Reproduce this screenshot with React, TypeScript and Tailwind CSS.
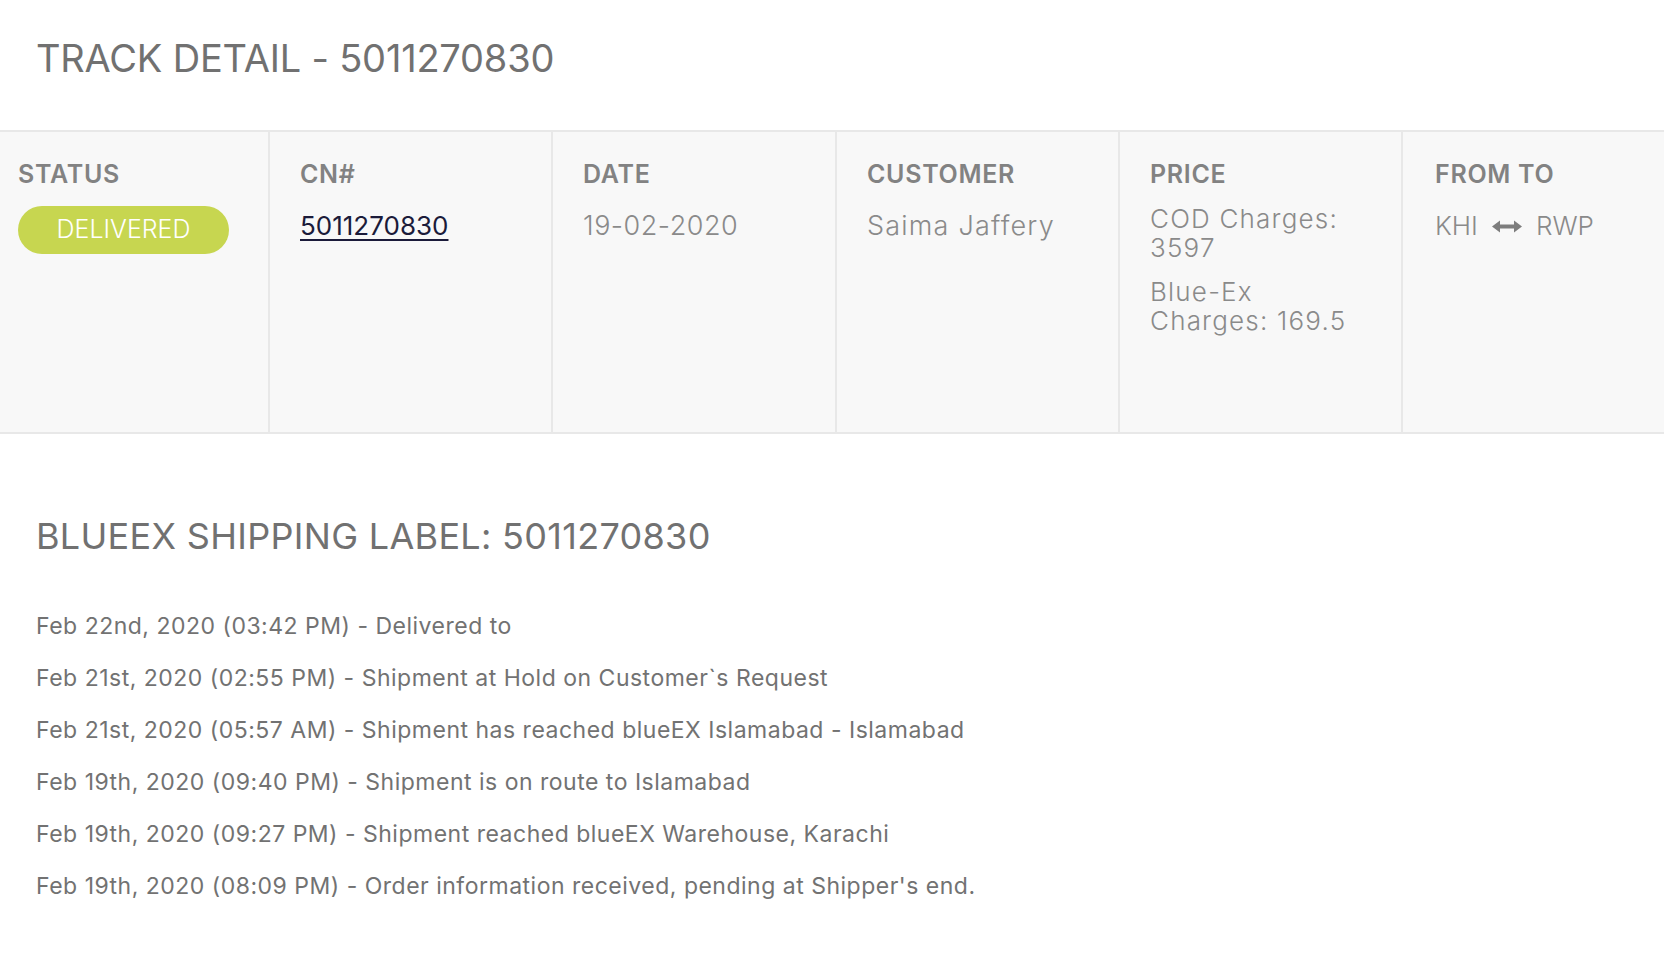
import React from "react"

const history = [
  "Feb 22nd, 2020 (03:42 PM) - Delivered to",
  "Feb 21st, 2020 (02:55 PM) - Shipment at Hold on Customer`s Request",
  "Feb 21st, 2020 (05:57 AM) - Shipment has reached blueEX Islamabad - Islamabad",
  "Feb 19th, 2020 (09:40 PM) - Shipment is on route to Islamabad",
  "Feb 19th, 2020 (09:27 PM) - Shipment reached blueEX Warehouse, Karachi",
  "Feb 19th, 2020 (08:09 PM) - Order information received, pending at Shipper's end.",
]

function Heading({ children }: { children: React.ReactNode }) {
  return (
    <div className="text-[25px] leading-[30px] font-semibold tracking-[0.7px] text-[#828282]">{children}</div>
  )
}

function Arrow() {
  return (
    <svg width="30" height="13" viewBox="0 0 30 13" className="mx-[14px]" aria-hidden="true">
      <path d="M0 6.5 L8 0.5 V4.5 H22 V0.5 L30 6.5 L22 12.5 V8.5 H8 V12.5 Z" fill="#7d7d7d" />
    </svg>
  )
}

export default function App() {
  return (
    <div className="min-h-screen bg-white font-['Inter','Noto_Sans',sans-serif]">
      <div className="h-[130px] px-[36px] pt-[36px]">
        <h1 className="text-[38px] leading-[44px] font-normal tracking-[-0.2px] text-[#717171]">
          TRACK DETAIL - 5011270830
        </h1>
      </div>

      <div className="grid h-[304px] grid-cols-[270px_283px_284px_283px_283px_1fr] border-y-2 border-[#e8e8e8] bg-[#f8f8f8]">
        <div className="border-r-2 border-[#e8e8e8] pl-[18px] pt-[27px]">
          <Heading>STATUS</Heading>
          <div className="mt-[17px] flex h-[48px] w-[211px] items-center justify-center rounded-full bg-[#c7d650] text-[25px] font-light text-white">
            DELIVERED
          </div>
        </div>
        <div className="border-r-2 border-[#e8e8e8] pl-[30px] pt-[27px]">
          <Heading>CN#</Heading>
          <a
            href="#"
            className="mt-[22px] block text-[26px] leading-[30px] font-normal text-[#1b1b3a] underline underline-offset-4 decoration-2"
          >
            5011270830
          </a>
        </div>
        <div className="border-r-2 border-[#e8e8e8] pl-[30px] pt-[27px]">
          <Heading>DATE</Heading>
          <div className="mt-[22px] text-[27px] leading-[30px] font-light tracking-[0.5px] text-[#8a8a8a]">19-02-2020</div>
        </div>
        <div className="border-r-2 border-[#e8e8e8] pl-[30px] pt-[27px]">
          <Heading>CUSTOMER</Heading>
          <div className="mt-[22px] text-[27px] leading-[30px] font-light tracking-[1.2px] text-[#8a8a8a]">
            Saima Jaffery
          </div>
        </div>
        <div className="border-r-2 border-[#e8e8e8] pl-[30px] pr-[20px] pt-[27px]">
          <Heading>PRICE</Heading>
          <div className="mt-[15px] text-[26px] leading-[29px] font-light tracking-[1.2px] text-[#8a8a8a]">
            <p>
              COD Charges:
              <br />
              3597
            </p>
            <p className="mt-[15px]">
              Blue-Ex
              <br />
              Charges: 169.5
            </p>
          </div>
        </div>
        <div className="pl-[32px] pt-[27px]">
          <Heading>FROM TO</Heading>
          <div className="mt-[22px] flex items-center text-[26px] leading-[30px] font-light text-[#8a8a8a]">
            <span>KHI</span>
            <Arrow />
            <span>RWP</span>
          </div>
        </div>
      </div>

      <div className="px-[36px] pt-[80px]">
        <h2 className="text-[36px] leading-[44px] font-normal tracking-[0.3px] text-[#717171]">
          BLUEEX SHIPPING LABEL: 5011270830
        </h2>
        <ul className="mt-[53px] flex flex-col gap-[22px]">
          {history.map((h) => (
            <li key={h} className="text-[23px] leading-[30px] tracking-[0.5px] text-[#727272]">
              {h}
            </li>
          ))}
        </ul>
      </div>
    </div>
  )
}
